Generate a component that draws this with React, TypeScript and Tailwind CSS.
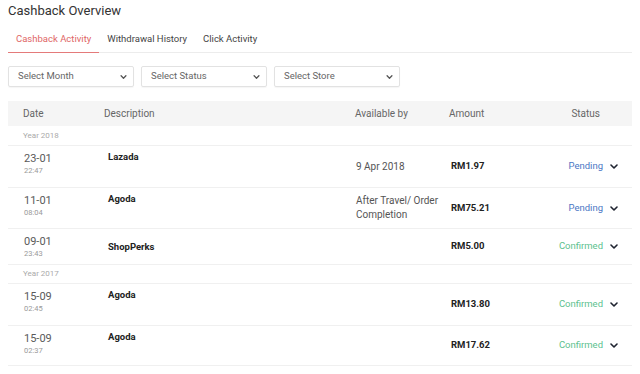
const tabs = ["Cashback Activity", "Withdrawal History", "Click Activity"];
const filters = ["Select Month", "Select Status", "Select Store"];

type Row = {
  kind: "row";
  date: string;
  time: string;
  store: string;
  available?: string[];
  amount: string;
  status: "Pending" | "Confirmed";
  h: string;
  compact?: boolean;
};
type Year = { kind: "year"; label: string; h: string };

const rows: (Row | Year)[] = [
  { kind: "year", label: "Year 2018", h: "h-[20px]" },
  { kind: "row", date: "23-01", time: "22:47", store: "Lazada", available: ["9 Apr 2018"], amount: "RM1.97", status: "Pending", h: "h-[42px]" },
  { kind: "row", date: "11-01", time: "08:04", store: "Agoda", available: ["After Travel/ Order", "Completion"], amount: "RM75.21", status: "Pending", h: "h-[41px]" },
  { kind: "row", date: "09-01", time: "23:43", store: "ShopPerks", amount: "RM5.00", status: "Confirmed", h: "h-[36px]", compact: true },
  { kind: "year", label: "Year 2017", h: "h-[19px]" },
  { kind: "row", date: "15-09", time: "02:45", store: "Agoda", amount: "RM13.80", status: "Confirmed", h: "h-[42px]" },
  { kind: "row", date: "15-09", time: "02:37", store: "Agoda", amount: "RM17.62", status: "Confirmed", h: "h-[40px]" },
];

function Chevron({ className }: { className?: string }) {
  return (
    <svg viewBox="0 0 8 5" className={className} fill="none">
      <path d="M1 1l3 3 3-3" stroke="currentColor" strokeWidth="1.6" strokeLinecap="round" strokeLinejoin="round" />
    </svg>
  );
}

export default function App() {
  return (
    <div className="w-[640px] h-[374px] overflow-hidden bg-white px-[8px] font-['Roboto','Liberation_Sans',sans-serif]">
      <h1 className="h-[22px] pt-[1px] text-[13px] leading-[20px] text-[#333]">Cashback Overview</h1>

      {/* tabs */}
      <div className="mt-[5px] flex h-[26px] w-[624px] border-b border-[#ececec]">
        {tabs.map((t, i) => (
          <div
            key={t}
            className={
              i === 0
                ? "-mb-px flex items-center border-b border-[#e47a7a] px-[8px] text-[9.5px] text-[#e06666]"
                : "flex items-center px-[8px] text-[9.5px] text-[#444]"
            }
          >
            {t}
          </div>
        ))}
      </div>

      {/* filters */}
      <div className="mt-[13px] flex gap-[7px]">
        {filters.map((f) => (
          <div
            key={f}
            className="flex h-[21px] w-[126px] items-center justify-between rounded-[2px] border border-[#e2e2e2] pl-[9px] pr-[6px] text-[9.5px] text-[#666] shadow-[0_1px_1px_rgba(0,0,0,0.04)]"
          >
            <span>{f}</span>
            <Chevron className="h-[4px] w-[7px] text-[#555]" />
          </div>
        ))}
      </div>

      {/* table */}
      <div className="mt-[14px] w-[624px]">
        <div className="grid h-[25px] grid-cols-[96px_251px_94px_1fr_90px] items-center bg-[#f5f5f5] text-[10px] text-[#666]">
          <div className="pl-[15px]">Date</div>
          <div>Description</div>
          <div>Available by</div>
          <div>Amount</div>
          <div className="pr-[32px] text-right">Status</div>
        </div>

        {rows.map((r, i) =>
          r.kind === "year" ? (
            <div key={i} className={`${r.h} flex items-center border-b border-[#f0f0f0] pl-[15px] text-[8px] text-[#aaa]`}>
              {r.label}
            </div>
          ) : (
            <div
              key={i}
              className={`${r.h} grid grid-cols-[96px_251px_94px_1fr_90px] border-b border-[#f0f0f0]`}
            >
              <div className={r.compact ? "pl-[16px] pt-[6px]" : "pl-[16px] pt-[6px]"}>
                <div className="text-[11px] leading-[14px] text-[#5a5a5a]">{r.date}</div>
                <div className="text-[7.5px] leading-[10px] text-[#999]">{r.time}</div>
              </div>
              <div className={r.compact ? "self-center pl-[4px]" : "pl-[4px] pt-[4px]"}>
                <div className="text-[9.5px] font-bold leading-[14px] text-[#222]">{r.store}</div>
              </div>
              <div className="self-center pl-[1px] text-[10px] leading-[14px] text-[#555]">
                {r.available?.map((a) => <div key={a}>{a}</div>)}
              </div>
              <div className="self-center pl-[2px] text-[9.5px] font-bold text-[#222]">{r.amount}</div>
              <div className="flex items-center justify-end gap-[7px] pr-[14px]">
                <span className={r.status === "Pending" ? "text-[9.5px] text-[#4a76c4]" : "text-[9.5px] text-[#5cbf8e]"}>
                  {r.status}
                </span>
                <Chevron className="h-[5px] w-[8px] text-[#1f2430]" />
              </div>
            </div>
          )
        )}
      </div>
    </div>
  );
}
